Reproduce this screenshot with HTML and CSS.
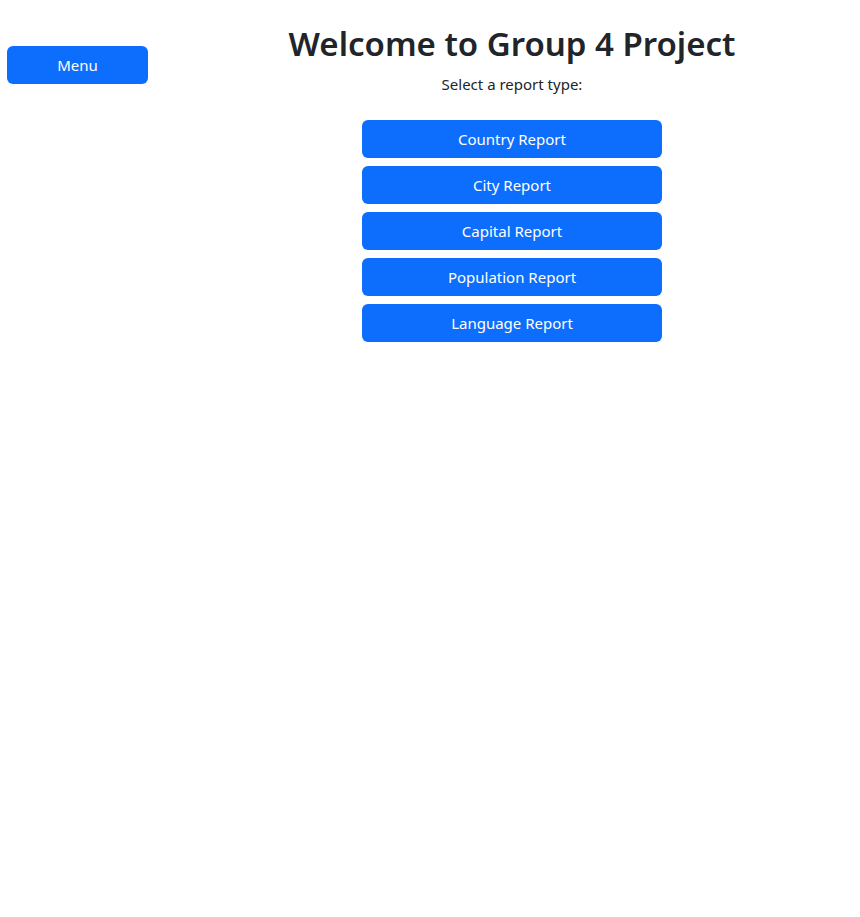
FILE: index.html
```html
<!DOCTYPE html>
<html lang="en">
<head>
    <meta charset="UTF-8">
    <meta name="viewport" content="width=device-width, initial-scale=1.0">
    <title>Group 4 Project</title>
    <link rel="stylesheet" href="styles.css">
</head>
<body>
    <div class="layout">
        <aside class="sidebar">
            <button class="btn">Menu</button>
        </aside>
        <main class="main">
            <h1>Welcome to Group 4 Project</h1>
            <p class="lead">Select a report type:</p>
            <div class="reports">
                <button class="btn">Country Report</button>
                <button class="btn">City Report</button>
                <button class="btn">Capital Report</button>
                <button class="btn">Population Report</button>
                <button class="btn">Language Report</button>
            </div>
        </main>
    </div>
</body>
</html>
```

FILE: styles.css
```css
body {
    margin: 0;
    font-family: "Noto Sans", "Open Sans", sans-serif;
    font-size: 16px;
    color: #212529;
    background: #fff;
}
.layout {
    display: flex;
}
.sidebar {
    width: 141px;
    flex-shrink: 0;
    padding: 46px 16px 0 7px;
}
.main {
    flex: 1;
    text-align: center;
    padding-top: 24px;
}
h1 {
    margin: 0 0 10px;
    font-size: 33px;
    font-weight: 600;
    line-height: 1.2;
}
.lead {
    margin: 0 0 26px;
    font-size: 15px;
}
.btn {
    display: block;
    width: 100%;
    height: 38px;
    border: none;
    border-radius: 6px;
    background-color: #0d6efd;
    color: #fff;
    font-family: inherit;
    font-size: 15px;
    cursor: pointer;
}
.reports {
    width: 300px;
    margin: 0 auto;
    display: flex;
    flex-direction: column;
    gap: 8px;
}
```
